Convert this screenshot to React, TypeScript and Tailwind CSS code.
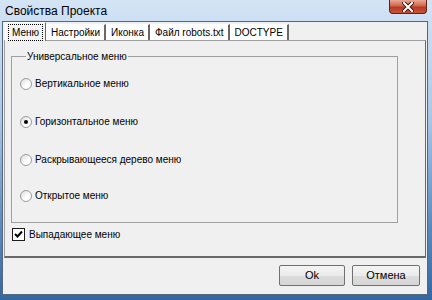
import { useState } from "react";

const tabs = ["Меню", "Настройки", "Иконка", "Файл robots.txt", "DOCTYPE"];
const menus = [
  "Вертикальное меню",
  "Горизонтальное меню",
  "Раскрывающееся дерево меню",
  "Открытое меню",
];

function Radio({ checked }: { checked: boolean }) {
  return (
    <span className="w-[12px] h-[12px] rounded-full border border-[#9a9a9a] bg-[linear-gradient(135deg,#dcdcdc,#ffffff_60%)] flex items-center justify-center shrink-0">
      {checked && <span className="w-[4px] h-[4px] rounded-full bg-black" />}
    </span>
  );
}

function CloseButton() {
  return (
    <div className="absolute left-[389px] top-0 w-[38px] h-[14px] rounded-b-[4px] border border-t-0 border-[#5e2116] bg-[linear-gradient(180deg,#e9a896_0%,#d2654d_45%,#b73a24_55%,#c9553a_100%)] flex items-center justify-center">
      <svg width="12" height="10" viewBox="0 0 12 10">
        <path d="M2 1 L10 9 M10 1 L2 9" stroke="#3b1a14" strokeWidth="4" strokeLinecap="square" />
        <path d="M2 1 L10 9 M10 1 L2 9" stroke="#ffffff" strokeWidth="2" strokeLinecap="square" />
      </svg>
    </div>
  );
}

export default function App() {
  const [tab, setTab] = useState(0);
  const [choice, setChoice] = useState(1);
  const [dropdown, setDropdown] = useState(true);

  return (
    <div
      className="relative w-[432px] h-[300px] overflow-hidden flex flex-col bg-[linear-gradient(180deg,#d3e4f5_0%,#c5daf0_15%,#a9c6e6_40%,#5a8bc0_75%,#3467a0_100%)] text-black text-[10px]"
      style={{ fontFamily: '"Liberation Sans", Arial, sans-serif' }}
    >
      <div className="h-[21px] flex items-center pl-[5px] text-[12px] text-black">Свойства Проекта</div>
      <CloseButton />

      <div className="ml-[2px] mr-[4px] mb-[5px] flex-1 flex flex-col border border-[#56687c] bg-[#f0f0f0]">
        <div className="flex items-end pl-[2px] h-[18px]">
          {tabs.map((t, i) => (
            <button
              key={t}
              onClick={() => setTab(i)}
              className={
                i === tab
                  ? "relative z-10 -mb-px h-[19px] px-[2px] bg-[#f4f4f4] border border-b-0 border-t-white border-l-white border-r-[#696969]"
                  : "h-[16px] px-[4px] bg-white border border-b-0 border-t-white border-l-white border-r-[#696969] border-r-2"
              }
            >
              {i === tab ? (
                <span className="px-[3px] py-[1px] border border-dotted border-black leading-[13px] block">{t}</span>
              ) : (
                <span className="leading-[14px] block">{t}</span>
              )}
            </button>
          ))}
        </div>

        <div className="mx-[1px] h-[218px] border border-t-[#a0a0a0] border-l-[#a0a0a0] border-r-[#696969] border-b-[#696969] border-b-2 flex flex-col">
          <fieldset className="ml-[6px] mr-[27px] mt-[9px] h-[173px] border border-[#a0a0a0] pl-[8px] flex flex-col">
            <legend className="ml-[6px] px-[1px] leading-[13px]">Универсальное меню</legend>
            {menus.map((m, i) => (
              <label
                key={m}
                onClick={() => setChoice(i)}
                className={"flex items-center gap-[3px] h-[13px] " + (i === 0 ? "mt-[14px]" : i === 3 ? "mt-[23px]" : "mt-[25px]")}
              >
                <Radio checked={choice === i} />
                <span>{m}</span>
              </label>
            ))}
          </fieldset>
          <label onClick={() => setDropdown(!dropdown)} className="flex items-center gap-[4px] pl-[7px] mt-[5px] h-[13px]">
            <span className="w-[13px] h-[13px] border border-[#1c1c1c] bg-white flex items-center justify-center">
              {dropdown && (
                <svg width="9" height="9" viewBox="0 0 9 9">
                  <path d="M1 4 L3.5 6.5 L8 1.5" stroke="#000" strokeWidth="2" fill="none" />
                </svg>
              )}
            </span>
            <span>Выпадающее меню</span>
          </label>
        </div>

        <div className="flex-1 flex items-center justify-end gap-[7px] pr-[7px] pb-[1px]">
          <button className="w-[66px] h-[21px] rounded-[2px] border border-[#707070] bg-[linear-gradient(180deg,#f4f4f4_0%,#ebebeb_50%,#dcdcdc_55%,#d6d6d6_100%)] text-[11px]">
            Ok
          </button>
          <button className="w-[68px] h-[21px] rounded-[2px] border border-[#707070] bg-[linear-gradient(180deg,#f4f4f4_0%,#ebebeb_50%,#dcdcdc_55%,#d6d6d6_100%)] text-[11px]">
            Отмена
          </button>
        </div>
      </div>
    </div>
  );
}
